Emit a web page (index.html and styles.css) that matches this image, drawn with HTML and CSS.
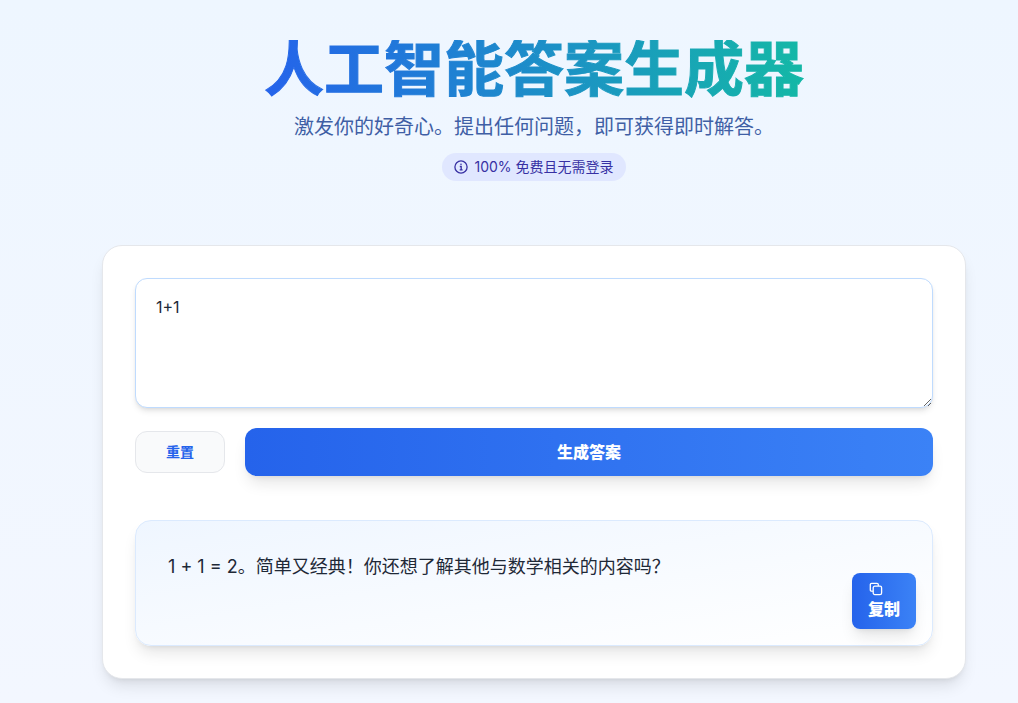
FILE: index.html
```
<!DOCTYPE html>
<html lang="zh-CN">
<head>
    <meta charset="UTF-8">
    <meta name="viewport" content="width=device-width, initial-scale=1.0">
    <title>人工智能答案生成器</title>
    <link rel="stylesheet" href="styles.css">
</head>
<body>
    <header class="header">
        <h1 class="title">人工智能答案生成器</h1>
        <p class="subtitle">激发你的好奇心。提出任何问题，即可获得即时解答。</p>
        <div class="badge">
            <svg class="badge-icon" viewBox="0 0 14 14" fill="none" stroke="currentColor" stroke-width="1.3" aria-hidden="true">
                <circle cx="7" cy="7" r="6.1"/>
                <path d="M5.8 6.5H7.2V9.7M5.7 9.8H8.6"/>
                <circle cx="7" cy="4.3" r="0.8" fill="currentColor" stroke="none"/>
            </svg>
            <span>100% 免费且无需登录</span>
        </div>
    </header>

    <main class="card">
        <form id="ask-form">
            <textarea class="question" id="question" aria-label="问题">1+1</textarea>
            <div class="actions">
                <button class="btn-reset" type="reset">重置</button>
                <button class="btn btn-generate" type="submit">生成答案</button>
            </div>
        </form>
        <section class="result">
            <p class="answer" id="answer">1 + 1 = 2。简单又经典！你还想了解其他与数学相关的内容吗？</p>
            <button class="btn btn-copy" type="button" onclick="copyAnswer()">
                <svg class="copy-icon" viewBox="0 0 14 14" fill="none" stroke="currentColor" stroke-width="1.3" stroke-linejoin="round" stroke-linecap="round" aria-hidden="true">
                    <rect x="4.2" y="4.2" width="8.4" height="8.4" rx="1.6"/>
                    <path d="M3.4 9.2H2.6A1.3 1.3 0 0 1 1.3 7.9V2.6A1.3 1.3 0 0 1 2.6 1.3H8A1.3 1.3 0 0 1 9.3 2.6V3.4"/>
                </svg>
                <span>复制</span>
            </button>
        </section>
    </main>

<script>
    function copyAnswer() {
        navigator.clipboard.writeText(document.getElementById('answer').textContent);
    }

    document.getElementById('ask-form').addEventListener('submit', function (e) {
        e.preventDefault();
    });
</script>
</body>
</html>
```
FILE: styles.css
```
* {
    box-sizing: border-box;
}

body {
    margin: 0;
    min-height: 100vh;
    padding: 40px 52px 24px 102px;
    background: linear-gradient(180deg, #eef6ff, #f3f7ff);
    font-family: Inter, "Noto Sans CJK SC", sans-serif;
    font-size: 16px;
    line-height: 24px;
    color: #1f2937;
}

button,
textarea {
    font-family: inherit;
}

.header {
    display: flex;
    flex-direction: column;
    align-items: center;
    margin-bottom: 64px;
    text-align: center;
}

.title {
    margin: 0 0 15px;
    font-size: 60px;
    line-height: 58px;
    font-weight: 700;
    color: transparent;
    background: linear-gradient(to right, #2563eb, #14b8a6);
    -webkit-background-clip: text;
    background-clip: text;
    -webkit-text-stroke: 1px transparent;
}

.subtitle {
    margin: 0 0 12px;
    font-size: 20px;
    line-height: 28px;
    color: #3f5fa5;
}

.badge {
    display: flex;
    align-items: center;
    gap: 6px;
    padding: 4px 12px;
    border-radius: 14px;
    background: #e0e7ff;
    color: #3730a3;
    font-size: 14px;
    line-height: 20px;
}

.badge-icon {
    width: 14px;
    height: 14px;
}

.card {
    padding: 32px;
    border: 1px solid #e5e7eb;
    border-radius: 20px;
    background: #fff;
    box-shadow: 0 10px 15px -3px rgba(0, 0, 0, 0.1), 0 4px 6px -4px rgba(0, 0, 0, 0.1);
}

.question {
    display: block;
    width: 100%;
    height: 130px;
    padding: 16px 20px;
    border: 1px solid #bfdbfe;
    border-radius: 12px;
    background: #fff;
    color: #1f2937;
    font-size: 16px;
    line-height: 24px;
    box-shadow: 0 4px 6px -1px rgba(0, 0, 0, 0.1), 0 2px 4px -2px rgba(0, 0, 0, 0.1);
    resize: vertical;
}

.actions {
    display: flex;
    align-items: center;
    gap: 20px;
    margin-top: 20px;
}

.btn-reset {
    padding: 10px 30px;
    border: 1px solid #e5e7eb;
    border-radius: 12px;
    background: #f9fafb;
    color: #2563eb;
    font-size: 14px;
    line-height: 20px;
    font-weight: 600;
    cursor: pointer;
}

.btn {
    border: none;
    background: linear-gradient(to right, #2563eb, #3b82f6);
    color: #fff;
    font-size: 16px;
    font-weight: 800;
    box-shadow: 0 10px 15px -3px rgba(0, 0, 0, 0.1), 0 4px 6px -4px rgba(0, 0, 0, 0.1);
    cursor: pointer;
}

.btn-generate {
    flex: 1;
    padding: 12px;
    border-radius: 12px;
    line-height: 24px;
}

.result {
    position: relative;
    min-height: 126px;
    margin-top: 44px;
    padding: 32px;
    border: 1px solid #dbeafe;
    border-radius: 16px;
    background: linear-gradient(to bottom right, #eff6ff, #fff);
    box-shadow: 0 10px 15px -3px rgba(0, 0, 0, 0.1), 0 4px 6px -4px rgba(0, 0, 0, 0.1);
}

.answer {
    margin: 0;
    font-size: 18px;
    line-height: 28px;
}

/* floats over the bottom right corner of the answer */
.btn-copy {
    position: absolute;
    right: 16px;
    bottom: 16px;
    display: flex;
    flex-direction: column;
    align-items: center;
    padding: 8px 16px;
    border-radius: 8px;
    line-height: 24px;
}

.copy-icon {
    width: 14px;
    height: 14px;
    margin: 1px 16px 1px 0;
}

.btn:hover {
    background: linear-gradient(to right, #1d4ed8, #2563eb);
}
```
